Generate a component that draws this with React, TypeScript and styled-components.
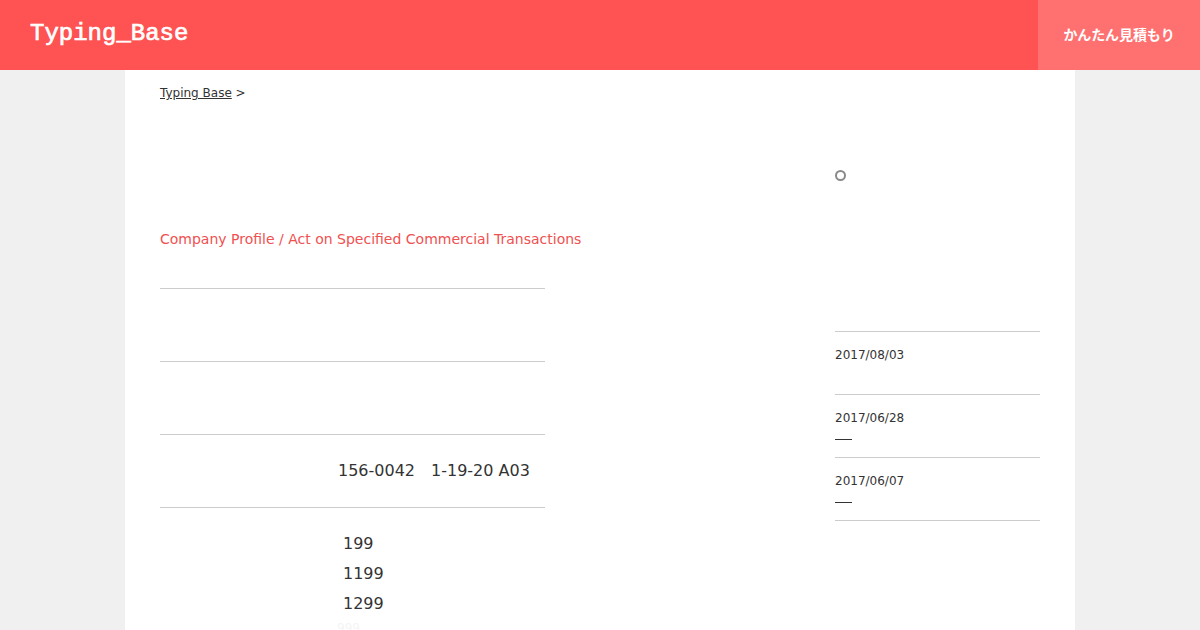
import React from "react";
import styled, { createGlobalStyle } from "styled-components";

const Global = createGlobalStyle`
  html, body { margin: 0; padding: 0; height: 630px; overflow: hidden; background: #f0f0f0; }
  body { font-family: "DejaVu Sans", "Noto Sans CJK JP", sans-serif; color: #333; }
`;
const Header = styled.header`
  height: 70px; background: #ff5252; display: flex; justify-content: space-between; align-items: stretch;
`;
const Logo = styled.div`
  font-family: "Liberation Mono", monospace; font-weight: 400; font-size: 24px; color: #fff;
  -webkit-text-stroke: 0.7px #fff;
  padding: 19px 0 0 30px; line-height: 30px; letter-spacing: 0;
`;
const Estimate = styled.a`
  width: 162px; background: #ff7070; color: #fff; font-size: 14px; font-weight: 700;
  font-family: "Noto Sans CJK JP", sans-serif; padding-bottom: 2px; box-sizing: border-box;
  display: flex; align-items: center; justify-content: center; letter-spacing: -0.1px;
`;
const Page = styled.div`
  width: 880px; height: 560px; margin: 0 auto; background: #fff; padding: 0 35px;
  display: flex; justify-content: space-between; overflow: hidden;
`;
const Main = styled.main` width: 385px; `;
const Crumb = styled.div`
  font-size: 12px; line-height: 16px; padding-top: 15px; white-space: nowrap;
`;
const CrumbLink = styled.a` text-decoration: underline; color: #333; `;
const Title = styled.h1`
  margin: 128px 0 0; font-size: 14px; font-weight: 400; line-height: 20px; color: #f05050; white-space: nowrap;
`;
const Table = styled.div` margin-top: 39px; `;
const Row = styled.div<{ $h: number }>`
  border-top: 1px solid #ccc; height: ${p => p.$h}px; box-sizing: border-box;
`;
const Address = styled.div`
  padding: 25px 0 0 178px; font-size: 16px; line-height: 22px; white-space: pre; color: #333;
`;
const Prices = styled.div` padding: 21px 0 0 183px; `;
const Price = styled.div` font-size: 16px; line-height: 30px; height: 30px; color: #333; `;
const Faint = styled.div` font-size: 12px; line-height: 16px; color: #f4f4f4; margin: 1px 0 0 -6px; `;
const Side = styled.aside` width: 205px; padding-top: 99px; `;
const Ring = styled.div`
  width: 7px; height: 7px; border: 2px solid #8a8a8a; border-radius: 50%; margin-top: 1px;
`;
const News = styled.div` margin-top: 150px; border-bottom: 1px solid #ccc; `;
const Item = styled.div`
  height: 63px; box-sizing: border-box; border-top: 1px solid #ccc; padding-top: 15px;
`;
const Date = styled.div` font-size: 12px; line-height: 16px; color: #333; `;
const Dash = styled.div` width: 17px; height: 1px; background: #333; margin-top: 13px; `;

export default function App() {
  return (
    <>
      <Global />
      <Header>
        <Logo>Typing_Base</Logo>
        <Estimate>かんたん見積もり</Estimate>
      </Header>
      <Page>
        <Main>
          <Crumb><CrumbLink>Typing Base</CrumbLink> &gt;</Crumb>
          <Title>Company Profile / Act on Specified Commercial Transactions</Title>
          <Table>
            <Row $h={73} />
            <Row $h={73} />
            <Row $h={73}><Address>{"156-0042\u30001-19-20 A03"}</Address></Row>
            <Row $h={130}>
              <Prices>
                <Price>199</Price>
                <Price>1199</Price>
                <Price>1299</Price>
                <Faint>999</Faint>
              </Prices>
            </Row>
          </Table>
        </Main>
        <Side>
          <Ring />
          <News>
            <Item><Date>2017/08/03</Date></Item>
            <Item><Date>2017/06/28</Date><Dash /></Item>
            <Item><Date>2017/06/07</Date><Dash /></Item>
          </News>
        </Side>
      </Page>
    </>
  );
}
